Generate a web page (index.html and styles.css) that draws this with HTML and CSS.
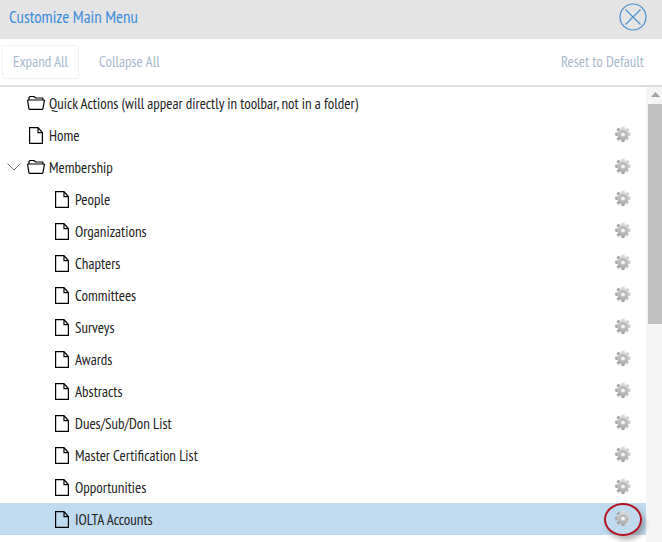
FILE: index.html
```html
<!DOCTYPE html>
<html lang="en">
<head>
<meta charset="utf-8">
<title>Customize Main Menu</title>
<link rel="stylesheet" href="styles.css">
</head>
<body>
<svg class="defs" width="0" height="0" aria-hidden="true">
  <defs>
    <linearGradient id="gear-fill" gradientUnits="userSpaceOnUse" x1="0" y1="1" x2="0" y2="17"><stop offset="0" stop-color="#dedede"/><stop offset="1" stop-color="#a2a2a2"/></linearGradient>
    <linearGradient id="gear-hole" gradientUnits="userSpaceOnUse" x1="0" y1="6" x2="0" y2="12"><stop offset="0" stop-color="#868686"/><stop offset="1" stop-color="#c8c8c8"/></linearGradient>
  </defs>
  <symbol id="file" viewBox="0 0 14 17"><path d="M0.600 0.600h8.400l4.400 5v10.800h-12.800zM9 0.600v5h4.400" fill="none" stroke="#000" stroke-width="1.200"/></symbol>
  <symbol id="folder" viewBox="0 0 18 14"><path d="M2 4V1.500l1-1h4l1.500 1.500h7l0.500 0.500V4M0.600 4.500l0.500-0.500h15.800l0.500 0.500-1.500 8.300-0.500 0.600h-13l-0.500-0.600z" fill="none" stroke="#000" stroke-width="1.200"/></symbol>
  <symbol id="gear" viewBox="0 0.700 18 18">
    <g fill="url(#gear-fill)">
      <rect x="7.300" y="1.200" width="3.400" height="15.600" rx="0.7"/><rect x="7.300" y="1.200" width="3.400" height="15.600" rx="0.7" transform="rotate(45 9 9)"/><rect x="7.300" y="1.200" width="3.400" height="15.600" rx="0.7" transform="rotate(90 9 9)"/><rect x="7.300" y="1.200" width="3.400" height="15.600" rx="0.7" transform="rotate(135 9 9)"/>
      <circle cx="9" cy="9" r="5.800"/>
    </g>
    <circle cx="9" cy="9" r="2.600" fill="#f4f4f4" stroke="url(#gear-hole)" stroke-width="1"/>
  </symbol>
</svg>
<main class="dialog">
  <header class="title-bar">
    <h1 class="title">Customize Main Menu</h1>
    <button class="close" aria-label="Close">
      <svg width="28" height="28" viewBox="0 0 28 28"><circle cx="14" cy="14" r="13" fill="none" stroke="#4a90cf" stroke-width="1.200"/><path d="M6.500 6.500l15 15M21.500 6.500l-15 15" stroke="#4a90cf" stroke-width="1.100"/></svg>
    </button>
  </header>
  <nav class="toolbar">
    <button class="tool tool-first">Expand All</button>
    <button class="tool">Collapse All</button>
    <button class="tool tool-reset">Reset to Default</button>
  </nav>
  <div class="body">
    <ul class="tree">
      <li class="row"><span class="twist"></span><svg class="ic-folder"><use href="#folder"/></svg><span class="label">Quick Actions (will appear directly in toolbar, not in a folder)</span></li>
      <li class="row"><span class="twist"></span><svg class="ic-file"><use href="#file"/></svg><span class="label">Home</span><svg class="gear"><use href="#gear"/></svg></li>
      <li class="row"><span class="twist"><svg width="14" height="8" viewBox="0 0 14 8"><path d="M0.500 0.500L7 7l6.500-6.500" fill="none" stroke="#777" stroke-width="1"/></svg></span><svg class="ic-folder"><use href="#folder"/></svg><span class="label">Membership</span><svg class="gear"><use href="#gear"/></svg></li>
      <li class="row child"><svg class="ic-file"><use href="#file"/></svg><span class="label">People</span><svg class="gear"><use href="#gear"/></svg></li>
      <li class="row child"><svg class="ic-file"><use href="#file"/></svg><span class="label">Organizations</span><svg class="gear"><use href="#gear"/></svg></li>
      <li class="row child"><svg class="ic-file"><use href="#file"/></svg><span class="label">Chapters</span><svg class="gear"><use href="#gear"/></svg></li>
      <li class="row child"><svg class="ic-file"><use href="#file"/></svg><span class="label">Committees</span><svg class="gear"><use href="#gear"/></svg></li>
      <li class="row child"><svg class="ic-file"><use href="#file"/></svg><span class="label">Surveys</span><svg class="gear"><use href="#gear"/></svg></li>
      <li class="row child"><svg class="ic-file"><use href="#file"/></svg><span class="label">Awards</span><svg class="gear"><use href="#gear"/></svg></li>
      <li class="row child"><svg class="ic-file"><use href="#file"/></svg><span class="label">Abstracts</span><svg class="gear"><use href="#gear"/></svg></li>
      <li class="row child"><svg class="ic-file"><use href="#file"/></svg><span class="label">Dues/Sub/Don List</span><svg class="gear"><use href="#gear"/></svg></li>
      <li class="row child"><svg class="ic-file"><use href="#file"/></svg><span class="label">Master Certification List</span><svg class="gear"><use href="#gear"/></svg></li>
      <li class="row child"><svg class="ic-file"><use href="#file"/></svg><span class="label">Opportunities</span><svg class="gear"><use href="#gear"/></svg></li>
      <li class="row child selected"><svg class="ic-file"><use href="#file"/></svg><span class="label">IOLTA Accounts</span><span class="gear-wrap"><svg class="gear"><use href="#gear"/></svg><span class="ring"></span></span></li>
    </ul>
    <div class="scrollbar">
      <svg class="arrow" width="9" height="5" viewBox="0 0 9 5"><path d="M4.500 0L9 5H0z" fill="#a3a3a3"/></svg>
      <div class="thumb"></div>
    </div>
  </div>
</main>
</body>
</html>
```
FILE: styles.css
```css
* { box-sizing: border-box; }
html, body { margin: 0; padding: 0; height: 100%; overflow: hidden; background: #fff; }
body { font-family: "PT Sans Narrow", "Liberation Sans", sans-serif; font-size: 15px; color: #333; }
.defs { position: absolute; }
.dialog { display: flex; flex-direction: column; height: 542px; width: 662px; }
.title-bar { height: 39px; background: #e4e4e4; display: flex; align-items: center; justify-content: space-between; padding: 0 14px 6px 9px; flex: none; }
.title { margin: 0; font-size: 17px; font-weight: 400; color: #3a8cdc; }
.close { border: 0; background: none; padding: 0; width: 30px; height: 30px; display: flex; align-items: center; justify-content: center; }
.toolbar { height: 48px; flex: none; border-bottom: 2px solid #dcdcdc; display: flex; align-items: center; padding: 6px 0 6px 2px; }
.tool { font: inherit; font-size: 15px; color: #a9b9cc; background: none; border: 1px solid transparent; height: 34px; padding: 0 10px 2px; border-radius: 3px; margin-right: 9px; }
.tool-first { border-color: #f0f0f0; }
.tool-reset { margin-left: auto; margin-right: 7px; }
.body { flex: 1; display: flex; min-height: 0; }
.tree { list-style: none; margin: 0; padding: 0; flex: 1; min-width: 0; }
.row { height: 32px; display: flex; align-items: center; padding-right: 14px; color: #222; }
.twist { width: 27px; flex: none; padding-left: 7px; display: flex; align-items: center; }
.child { padding-left: 53px; }
.ic-file { width: 14px; height: 17px; flex: none; margin: 0 6px 0 2px; }
.ic-folder { width: 18px; height: 14px; flex: none; margin-right: 4px; }
.label { flex: 1; }
.gear { width: 18px; height: 18px; flex: none; display: block; filter: blur(0.35px); }
.selected { background: #c0daf0; }
.gear-wrap { position: relative; display: block; }
.ring { position: absolute; left: -10px; top: -7px; width: 38px; height: 33px; border: 2px solid #b3121f; border-radius: 50%; box-shadow: 3px 4px 5px rgba(90, 90, 90, 0.45); filter: blur(0.3px); }
.scrollbar { width: 16px; flex: none; background: #f5f5f5; padding-left: 2px; display: flex; flex-direction: column; align-items: center; }
.arrow { margin: 5px 0 7px; flex: none; }
.thumb { width: 14px; height: 220px; background: #c1c1c1; flex: none; }
```
